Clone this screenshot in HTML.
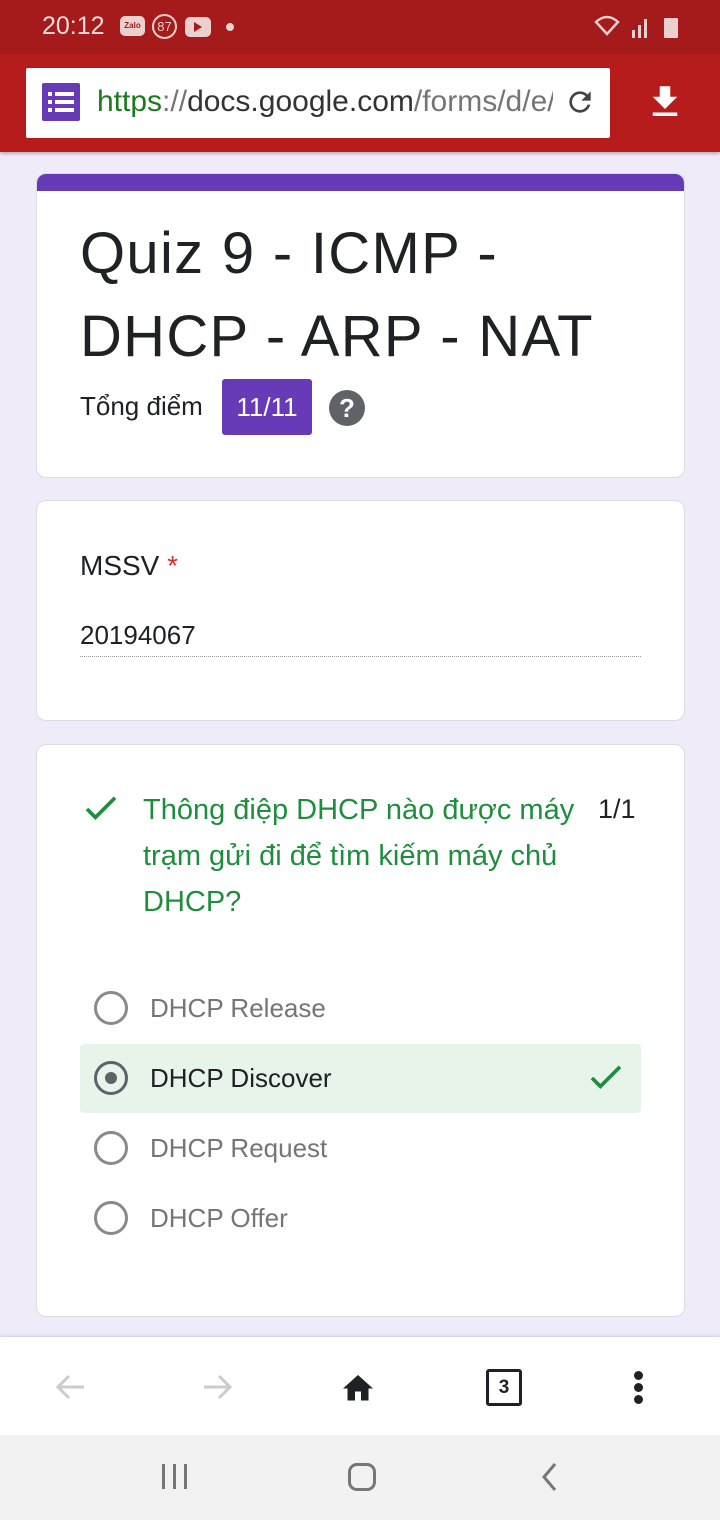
<!DOCTYPE html>
<html><head><meta charset="utf-8"><style>
*{margin:0;padding:0;box-sizing:border-box}
body{width:720px;height:1520px;background:#f0ebf8;font-family:"Liberation Sans","Noto Sans CJK SC",sans-serif;position:relative;overflow:hidden}
.abs{position:absolute}
.card{position:absolute;left:36px;width:649px;background:#fff;border:1px solid #dadce0;border-radius:10px}
.radio{position:absolute;left:94px;width:34px;height:34px;border:3px solid #8a8a8a;border-radius:50%}
.opt{position:absolute;left:150px;font-size:26px;color:#757575}
</style></head><body>
<div class="abs" style="left:0;top:0;width:720px;height:54px;background:#a51a1a"></div>
<div class="abs" style="left:42px;top:12px;font-size:25px;color:#f3dede">20:12</div>
<div class="abs" style="left:120px;top:16px;width:25px;height:20px;background:#eccfcf;border-radius:5px;font-size:8px;color:#a51a1a;text-align:center;line-height:20px;font-weight:bold">Zalo</div>
<div class="abs" style="left:152px;top:14px;width:25px;height:25px;border:2px solid #eccfcf;border-radius:50%;font-size:13px;color:#eccfcf;text-align:center;line-height:21px">87</div>
<div class="abs" style="left:185px;top:17px;width:26px;height:20px;background:#eccfcf;border-radius:5px"></div>
<div class="abs" style="left:194px;top:22px;width:0;height:0;border-left:8px solid #a51a1a;border-top:5px solid transparent;border-bottom:5px solid transparent"></div>
<div class="abs" style="left:226px;top:23px;width:8px;height:8px;background:#eccfcf;border-radius:50%"></div>
<svg class="abs" style="left:594px;top:14px" width="90" height="26"><path d="M2 8 Q13 -2 24 8 L13 20Z" fill="none" stroke="#eccfcf" stroke-width="2.5"/><rect x="38" y="16" width="3" height="8" fill="#eccfcf"/><rect x="44" y="11" width="3" height="13" fill="#eccfcf"/><rect x="50" y="5" width="3" height="19" fill="#eccfcf"/><rect x="70" y="4" width="14" height="20" rx="1" fill="#eccfcf"/></svg>
<div class="abs" style="left:0;top:54px;width:720px;height:98px;background:#b71c1c;box-shadow:0 2px 3px rgba(0,0,0,.25)"></div>
<div class="abs" style="left:26px;top:68px;width:584px;height:70px;background:#fff;border-radius:2px"></div>
<div class="abs" style="left:42px;top:83px;width:38px;height:38px;background:#673ab7;border-radius:2px"></div>
<svg class="abs" style="left:48px;top:91px" width="28" height="24"><g fill="#fff"><rect x="0" y="1" width="4" height="4"/><rect x="7" y="1" width="19" height="4"/><rect x="0" y="9" width="4" height="4"/><rect x="7" y="9" width="19" height="4"/><rect x="0" y="17" width="4" height="4"/><rect x="7" y="17" width="19" height="4"/></g></svg>
<div class="abs" style="left:97px;top:85px;font-size:30px;white-space:nowrap;width:456px;overflow:hidden"><span style="color:#1b7a1b">https</span><span style="color:#757575">://</span><span style="color:#333">docs.google.com</span><span style="color:#757575">/forms/d/e/</span></div>
<svg class="abs" style="left:564px;top:86px" width="32" height="32" viewBox="0 0 24 24"><path d="M17.65 6.35A7.96 7.96 0 0 0 12 4a8 8 0 1 0 7.73 10h-2.08A6 6 0 1 1 12 6c1.66 0 3.14.69 4.22 1.78L13 11h7V4l-2.35 2.35z" fill="#444"/></svg>
<svg class="abs" style="left:644px;top:80px" width="42" height="44" viewBox="0 0 24 24"><path d="M19 9h-4V3H9v6H5l7 7 7-7zM5 18v2h14v-2H5z" fill="#fff"/></svg>

<div class="card" style="top:173px;height:305px;overflow:hidden"><div style="height:17px;background:#673ab7"></div></div>
<div class="abs" style="left:80px;top:212px;font-size:58px;letter-spacing:1.3px;color:#202124;line-height:83px">Quiz 9 - ICMP -<br>DHCP - ARP - NAT</div>
<div class="abs" style="left:80px;top:391px;font-size:26px;color:#202124">Tổng điểm</div>
<div class="abs" style="left:222px;top:379px;width:90px;height:56px;background:#673ab7;border-radius:3px;color:#fff;font-size:26px;text-align:center;line-height:56px">11/11</div>
<div class="abs" style="left:329px;top:390px;width:36px;height:36px;background:#5f6368;border-radius:50%;color:#fff;font-size:26px;font-weight:bold;text-align:center;line-height:36px">?</div>

<div class="card" style="top:500px;height:221px"></div>
<div class="abs" style="left:80px;top:550px;font-size:28px;color:#202124">MSSV <span style="color:#d93025">*</span></div>
<div class="abs" style="left:80px;top:620px;font-size:26px;color:#202124">20194067</div>
<div class="abs" style="left:80px;top:656px;width:561px;border-top:1px dotted #999"></div>

<div class="card" style="top:744px;height:573px"></div>
<svg class="abs" style="left:84px;top:795px" width="34" height="28" viewBox="0 0 24 20"><path d="M2 10l6 6L22 2" fill="none" stroke="#1e8e3e" stroke-width="2.6"/></svg>
<div class="abs" style="left:143px;top:787px;width:460px;font-size:29px;color:#1e8e3e;line-height:46px">Thông điệp DHCP nào được máy trạm gửi đi để tìm kiếm máy chủ DHCP?</div>
<div class="abs" style="left:598px;top:794px;font-size:27px;color:#202124">1/1</div>

<div class="radio" style="top:991px"></div><div class="opt" style="top:993px">DHCP Release</div>
<div class="abs" style="left:80px;top:1044px;width:561px;height:69px;background:#e6f4ea;border-radius:4px"></div>
<div class="radio" style="top:1061px;border-color:#5f6368"></div><div class="abs" style="left:105px;top:1072px;width:12px;height:12px;background:#5f6368;border-radius:50%"></div>
<div class="opt" style="top:1063px;color:#202124">DHCP Discover</div>
<svg class="abs" style="left:589px;top:1064px" width="34" height="28" viewBox="0 0 24 20"><path d="M2 10l6 6L22 2" fill="none" stroke="#1e8e3e" stroke-width="2.6"/></svg>
<div class="radio" style="top:1131px"></div><div class="opt" style="top:1133px">DHCP Request</div>
<div class="radio" style="top:1201px"></div><div class="opt" style="top:1203px">DHCP Offer</div>

<div class="abs" style="left:0;top:1337px;width:720px;height:98px;background:#fff;box-shadow:0 -1px 3px rgba(0,0,0,.15)"></div>
<svg class="abs" style="left:54px;top:1372px" width="32" height="30" viewBox="0 0 32 30"><path d="M30 15H4M15 4L4 15l11 11" fill="none" stroke="#ccc" stroke-width="3"/></svg>
<svg class="abs" style="left:202px;top:1372px" width="32" height="30" viewBox="0 0 32 30"><path d="M2 15h26M17 4l11 11-11 11" fill="none" stroke="#ccc" stroke-width="3"/></svg>
<svg class="abs" style="left:340px;top:1370px" width="36" height="34" viewBox="0 0 24 22"><path d="M10 20v-6h4v6h5v-8h3L12 3 2 12h3v8z" fill="#202124"/></svg>
<div class="abs" style="left:486px;top:1369px;width:36px;height:37px;border:3px solid #202124;border-radius:3px;font-size:19px;font-weight:bold;text-align:center;line-height:31px;color:#202124">3</div>
<div class="abs" style="left:634px;top:1371px;width:9px;height:9px;background:#202124;border-radius:50%"></div>
<div class="abs" style="left:634px;top:1383px;width:9px;height:9px;background:#202124;border-radius:50%"></div>
<div class="abs" style="left:634px;top:1395px;width:9px;height:9px;background:#202124;border-radius:50%"></div>

<div class="abs" style="left:0;top:1435px;width:720px;height:85px;background:#f2f2f2"></div>
<div class="abs" style="left:162px;top:1464px;width:3px;height:25px;background:#777"></div>
<div class="abs" style="left:173px;top:1464px;width:3px;height:25px;background:#777"></div>
<div class="abs" style="left:184px;top:1464px;width:3px;height:25px;background:#777"></div>
<div class="abs" style="left:348px;top:1463px;width:28px;height:28px;border:3px solid #777;border-radius:9px"></div>
<svg class="abs" style="left:538px;top:1462px" width="22" height="30"><path d="M17 2L6 15l11 13" fill="none" stroke="#777" stroke-width="3"/></svg>
</body></html>
